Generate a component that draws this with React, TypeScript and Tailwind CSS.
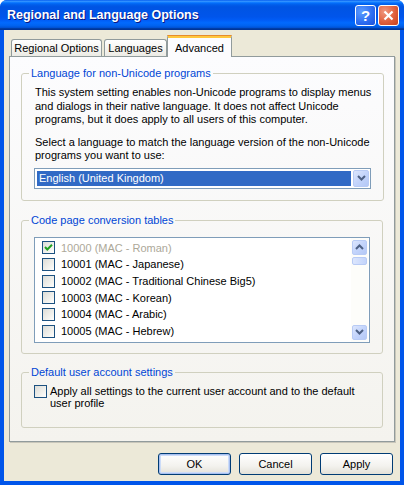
import React from "react";

function Check({ checked }: { checked?: boolean }) {
  return (
    <span className="w-[13px] h-[13px] shrink-0 border border-[#1C5180] bg-[linear-gradient(135deg,#DCDCD7_0%,#F4F4F0_70%,#FFFFFF_100%)] flex items-center justify-center">
      {checked && (
        <svg width="11" height="11" viewBox="0 0 11 11">
          <path d="M2 5 L4.3 7.5 L9 2.8" stroke="#21A121" strokeWidth="2" fill="none" />
        </svg>
      )}
    </span>
  );
}

function Chevron({ up }: { up?: boolean }) {
  return (
    <svg width="9" height="6" viewBox="0 0 9 6">
      {up ? (
        <path d="M1 5 L4.5 1.5 L8 5" stroke="#4D6185" strokeWidth="2" fill="none" />
      ) : (
        <path d="M1 1 L4.5 4.5 L8 1" stroke="#4D6185" strokeWidth="2" fill="none" />
      )}
    </svg>
  );
}

const scrollBtn =
  "w-[15px] h-[15px] rounded-[2px] border border-[#B8CBF5] bg-[linear-gradient(135deg,#DCE6FD_0%,#C3D4FB_50%,#B4C8F6_100%)] flex items-center justify-center";

const items = [
  "10000 (MAC - Roman)",
  "10001 (MAC - Japanese)",
  "10002 (MAC - Traditional Chinese Big5)",
  "10003 (MAC - Korean)",
  "10004 (MAC - Arabic)",
  "10005 (MAC - Hebrew)",
];

function Button({ label, def }: { label: string; def?: boolean }) {
  return (
    <div
      className={
        "w-[73px] h-[22px] rounded-[3px] border border-[#003C74] bg-[linear-gradient(to_bottom,#FFFFFF_0%,#F3F2EE_60%,#E3E1D8_100%)] flex items-center justify-center text-black " +
        (def ? "shadow-[inset_0_0_0_1px_#A8C0F0,inset_0_0_0_2px_#CCDCF8]" : "")
      }
    >
      {label}
    </div>
  );
}

export default function App() {
  return (
    <div className="w-[404px] h-[485px] bg-[#0055EA] rounded-t-[7px] overflow-hidden flex flex-col font-['Liberation_Sans',Arial,sans-serif] text-[11px] text-black">
      {/* Title bar */}
      <div className="h-[30px] shrink-0 flex items-center pl-[7px] pr-[5px] bg-[linear-gradient(to_bottom,#0058EE_0%,#3593FF_4%,#288EFF_6%,#127DFF_8%,#036FFC_10%,#0262EE_14%,#0057E5_20%,#0054E3_24%,#0055EB_56%,#005BF5_66%,#026AFE_76%,#0062EF_86%,#0052D6_92%,#0040AB_94%,#003092_100%)]">
        <div className="flex-1 text-white font-bold text-[12.5px] [text-shadow:1px_1px_#0A1883] tracking-[0px]">
          Regional and Language Options
        </div>
        <div className="flex gap-[2px]">
          <div className="w-[21px] h-[21px] rounded-[3px] border border-white bg-[radial-gradient(circle_at_30%_30%,#5C9CFF_0%,#2C6CF0_60%,#1E50D8_100%)] flex items-center justify-center text-white font-bold text-[15px] leading-none">
            ?
          </div>
          <div className="w-[21px] h-[21px] rounded-[3px] border border-white bg-[radial-gradient(circle_at_30%_30%,#F09880_0%,#E0603C_55%,#C8401C_100%)] flex items-center justify-center">
            <svg width="11" height="11" viewBox="0 0 11 11">
              <path d="M1.5 1.5 L9.5 9.5 M9.5 1.5 L1.5 9.5" stroke="white" strokeWidth="2.2" />
            </svg>
          </div>
        </div>
      </div>

      {/* Body */}
      <div className="flex-1 mx-[4px] mb-[4px] bg-[#ECE9D8] flex flex-col">
        {/* Tabs */}
        <div className="h-[26px] shrink-0 flex items-end pl-[7px]">
          <div className="w-[91px] h-[17px] mr-[2px] border border-b-0 border-[#919B9C] rounded-t-[3px] bg-[linear-gradient(to_bottom,#FFFFFF_0%,#F4F3EF_60%,#ECEBE5_100%)] flex items-center justify-center">
            Regional Options
          </div>
          <div className="w-[63px] h-[17px] border border-b-0 border-[#919B9C] rounded-t-[3px] bg-[linear-gradient(to_bottom,#FFFFFF_0%,#F4F3EF_60%,#ECEBE5_100%)] flex items-center justify-center">
            Languages
          </div>
          <div className="relative z-10 w-[65px] h-[22px] -mb-[1px] border-x border-[#919B9C] rounded-t-[3px] bg-[#FCFCFE] flex flex-col">
            <div className="h-[1px] bg-[#E68B2C] rounded-t-[3px] -mx-[1px]" />
            <div className="h-[2px] bg-[#FFC73C]" />
            <div className="flex-1 flex items-start justify-center pt-[2px]">Advanced</div>
          </div>
        </div>

        {/* Panel */}
        <div className="ml-[5px] w-[386px] h-[386px] shrink-0 border border-[#919B9C] shadow-[1px_1px_0_#C8C6BA] bg-[linear-gradient(to_bottom,#FCFCFE_0%,#F4F3EE_100%)] flex flex-col">
          {/* Group 1 */}
          <fieldset className="mt-[10px] mx-[11px] border border-[#D0D0BF] rounded-[3px] p-0">
            <legend className="ml-[7px] px-[2px] text-[#0046D5] leading-[13px]">
              Language for non-Unicode programs
            </legend>
            <div className="pt-[6px] px-[12px] pb-[11px] flex flex-col">
              <p className="pl-[1px] leading-[13.5px] whitespace-nowrap">
                This system setting enables non-Unicode programs to display menus
                <br />
                and dialogs in their native language. It does not affect Unicode
                <br />
                programs, but it does apply to all users of this computer.
              </p>
              <p className="pl-[1px] mt-[9px] leading-[13.5px] whitespace-nowrap">
                Select a language to match the language version of the non-Unicode
                <br />
                programs you want to use:
              </p>
              <div className="mt-[5px] h-[21px] border border-[#7F9DB9] bg-white p-[1px] flex">
                <div className="flex-1 m-[1px] bg-[#316AC5] text-white flex items-center pl-[2px]">
                  English (United Kingdom)
                </div>
                <div className="w-[16px] ml-[1px] rounded-[2px] border border-[#B8CBF5] bg-[linear-gradient(135deg,#DCE6FD_0%,#C3D4FB_50%,#B4C8F6_100%)] flex items-center justify-center">
                  <Chevron />
                </div>
              </div>
            </div>
          </fieldset>

          {/* Group 2 */}
          <fieldset className="mt-[13px] mx-[11px] border border-[#D0D0BF] rounded-[3px] p-0">
            <legend className="ml-[7px] px-[2px] text-[#0046D5] leading-[13px]">
              Code page conversion tables
            </legend>
            <div className="pt-[10px] px-[12px] pb-[10px]">
              <div className="h-[106px] border border-[#7F9DB9] bg-white flex">
                <div className="flex-1 pl-[7px] pt-[2px] flex flex-col">
                  {items.map((t, i) => (
                    <div key={t} className="h-[16.67px] flex items-center gap-[6px]">
                      <Check checked={i === 0} />
                      <span className={i === 0 ? "text-[#ACA899]" : ""}>{t}</span>
                    </div>
                  ))}
                </div>
                <div className="w-[17px] mr-[1px] pt-[2px] pb-[2px] flex flex-col items-center bg-[#FDFDFA]">
                  <div className={scrollBtn}>
                    <Chevron up />
                  </div>
                  <div className="mt-[2px] w-[15px] h-[8px] rounded-[2px] border border-[#B8CBF5] bg-[linear-gradient(to_right,#DCE6FD,#C3D4FB)]" />
                  <div className="flex-1" />
                  <div className={scrollBtn}>
                    <Chevron />
                  </div>
                </div>
              </div>
            </div>
          </fieldset>

          {/* Group 3 */}
          <fieldset className="mt-[12px] mx-[11px] border border-[#D0D0BF] rounded-[3px] p-0">
            <legend className="ml-[7px] px-[2px] text-[#0046D5] leading-[13px]">
              Default user account settings
            </legend>
            <div className="pt-[6px] pl-[12px] pb-[17px] flex items-start gap-[3px]">
              <Check />
              <span className="leading-[12.5px]">
                Apply all settings to the current user account and to the default
                <br />
                user profile
              </span>
            </div>
          </fieldset>
        </div>

        {/* Buttons */}
        <div className="mt-[11px] pr-[7px] flex justify-end gap-[8px]">
          <Button label="OK" def />
          <Button label="Cancel" />
          <Button label="Apply" />
        </div>
      </div>
    </div>
  );
}
